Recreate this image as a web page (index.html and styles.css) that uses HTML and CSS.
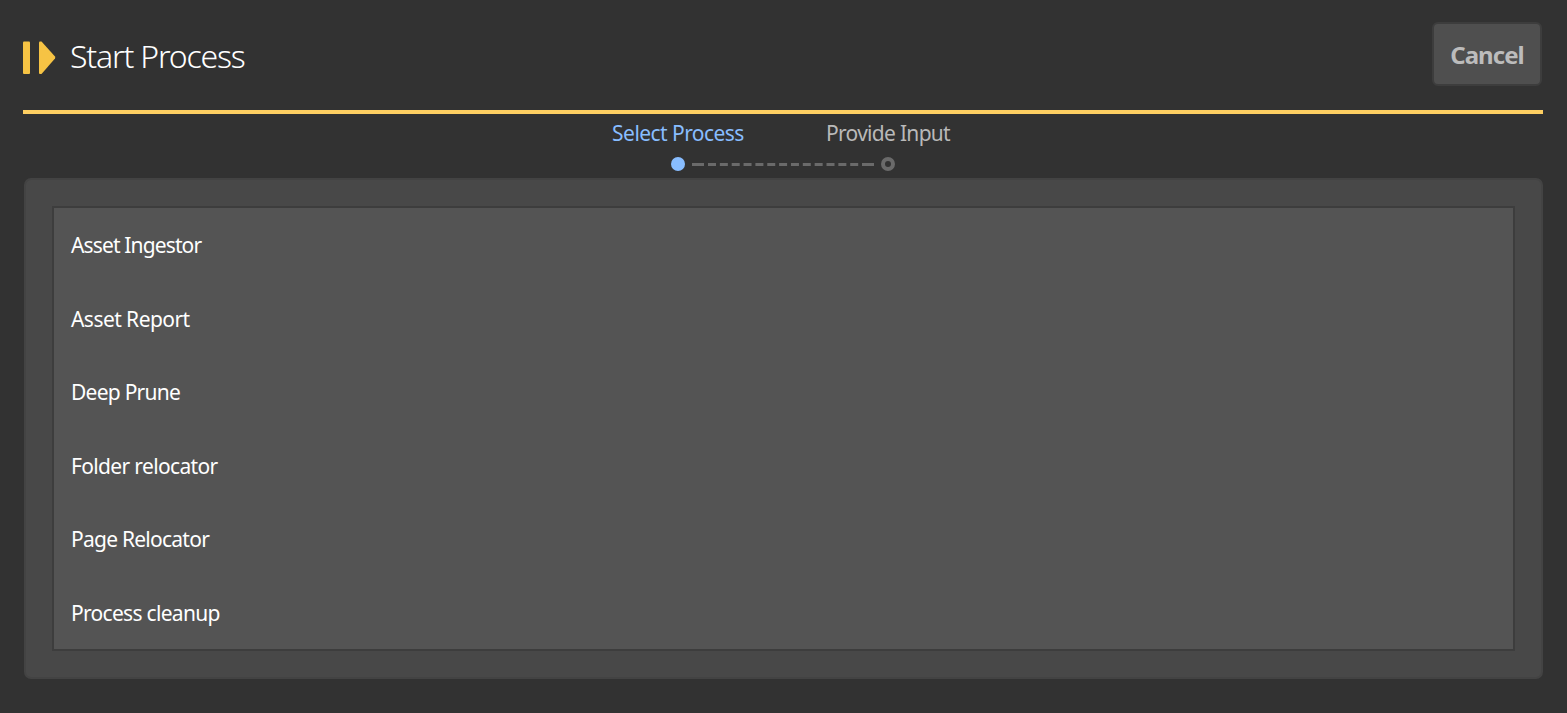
FILE: index.html
```html
<!DOCTYPE html>
<html lang="en">
<head>
<meta charset="utf-8">
<title>Start Process</title>
<link rel="stylesheet" href="styles.css">
</head>
<body>
<header class="header">
  <svg class="logo" width="33" height="34" viewBox="0 0 33 34"><rect y=".5" width="7" height="32.5" rx="1"/><path d="M16 1.5Q16 .5 17 .5H18.500L32 15.500Q32.500 16.500 32 17.500L18.500 33H17Q16 33 16 32Z"/></svg>
  <h1 class="title"><span class="title-text">Start Process</span></h1>
  <button class="cancel" type="button"><span class="cancel-text">Cancel</span></button>
</header>
<nav class="steps">
  <div class="step active"><span class="t-select">Select Process</span></div>
  <div class="step"><span class="t-provide">Provide Input</span></div>
  <svg class="track" width="224" height="14" viewBox="0 0 224 14"><circle cx="7" cy="7" r="7" fill="#88bdff"/><path d="M37 7.500H188" class="dash"/><path d="M21 7.500H33M191 7.500H203" class="cap"/><circle cx="217" cy="7" r="5" class="ring"/></svg>
</nav>
<main class="panel">
  <ul class="list">
    <li><span class="i1">Asset Ingestor</span></li>
    <li><span class="i2">Asset Report</span></li>
    <li><span class="i3">Deep Prune</span></li>
    <li><span class="i4">Folder relocator</span></li>
    <li><span class="i5">Page Relocator</span></li>
    <li><span class="i6">Process cleanup</span></li>
  </ul>
</main>
</body>
</html>
```
FILE: styles.css
```css
* { box-sizing: border-box; }
body { margin: 0; height: 713px; padding: 0 24px 0 23px; overflow: hidden; background: #323232; color: #fff; font-family: "Noto Sans", "Open Sans", sans-serif; }
.header { display: flex; align-items: flex-start; height: 114px; padding: 22px 1px 0 0; border-bottom: 4px solid #fecf62; }
.logo { margin-top: 19px; fill: #f6c344; flex: none; }
.title { flex: 1; margin: 12px 0 0 14px; font-size: 32px; line-height: 44px; font-weight: 300; white-space: nowrap; }
.title-text { letter-spacing: -1.18px; }
.cancel { width: 110px; height: 64px; padding: 2px 0 0; border: 2px solid #3d3d3d; border-radius: 6px; background: #4f4f4f; color: #bcbcbc; font: 700 24px/32px "Noto Sans", sans-serif; white-space: nowrap; }
.cancel-text { letter-spacing: -.95px; }
.steps { display: grid; grid-template-columns: 210px 210px; grid-template-rows: 43px 14px; width: 420px; height: 64px; margin-left: 550px; font-size: 21px; line-height: 38px; text-align: center; color: #b9b9b9; white-space: nowrap; }
.active { color: #88bdff; }
.t-select { letter-spacing: -.55px; }
.t-provide { letter-spacing: -.7px; }
.track { grid-column: 1 / 3; justify-self: center; }
.dash, .cap, .ring { fill: none; stroke: #6a6a6a; stroke-width: 3; }
.dash { stroke-dasharray: 8 3.850; }
.ring { stroke-width: 4; }
.panel { height: 501px; margin-left: 1px; padding: 26px; border: 2px solid #434343; border-radius: 7px; background: #484848; }
.list { height: 445px; margin: 0; padding: 0 17px; border: 2px solid #3d3d3d; background: #545454; list-style: none; font-size: 21px; }
.list li { height: 73.500px; line-height: 75px; white-space: nowrap; }
.i1 { letter-spacing: -.86px; }
.i2 { letter-spacing: -.55px; }
.i3 { letter-spacing: -.75px; }
.i4 { letter-spacing: -.65px; }
.i5 { letter-spacing: -.75px; }
.i6 { letter-spacing: -.7px; }
```
